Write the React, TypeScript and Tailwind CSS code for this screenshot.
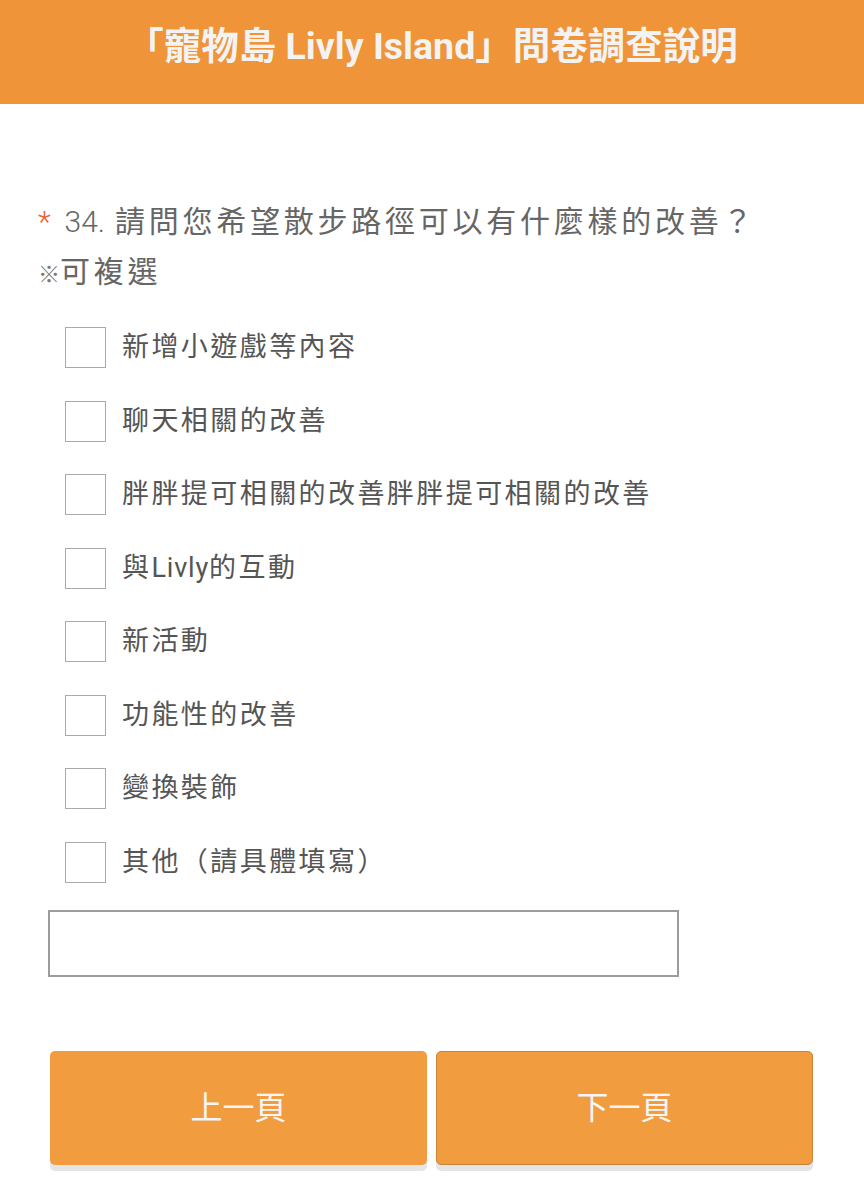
import React from 'react';

const options: React.ReactNode[] = [
  '新增小遊戲等內容',
  '聊天相關的改善',
  '胖胖提可相關的改善胖胖提可相關的改善',
  <>
    與<span className="tracking-[0.03em]">Livly</span>的互動
  </>,
  '新活動',
  '功能性的改善',
  '變換裝飾',
  '其他（請具體填寫）',
];

const App: React.FC = () => {
  return (
    <div className="w-[864px] min-h-[1198px] bg-white font-['Roboto','Noto_Sans_CJK_TC',sans-serif]">
      <header className="h-[104px] bg-[#f09439] flex items-center justify-center">
        <h1 className="text-[37.5px] font-bold text-[#f3f3f3] leading-none -mt-[10px]">
          「寵物島 Livly Island」問卷調查說明
        </h1>
      </header>

      <div className="pl-[38px] pt-[93px] text-[30px] leading-[50px] text-[#666] tracking-[0.125em]">
        <div className="flex items-baseline">
          <span className="text-[#f0602e] mr-[10px] font-light">*</span>
          <span className="font-light tracking-normal mr-[10px]">34.</span>
          <span>請問您希望散步路徑可以有什麼樣的改善？</span>
        </div>
        <div className="flex items-baseline">
          <span className="text-[22px] text-[#777] tracking-normal">※</span>
          <span>可複選</span>
        </div>
      </div>

      <ul className="mt-[27px] pl-[65px] flex flex-col gap-[32.5px]">
        {options.map((label, i) => (
          <li key={i} className="flex items-center h-[41px]">
            <span className="w-[41px] h-[41px] border border-[#aaa] bg-white shrink-0" />
            <span className="ml-[16px] text-[27px] tracking-[0.09em] text-[#555]">{label}</span>
          </li>
        ))}
      </ul>

      <div className="mt-[27px] pl-[48px]">
        <input
          type="text"
          className="w-[631px] h-[67px] border-2 border-[#9c9c9c] bg-white outline-none"
        />
      </div>

      <div className="mt-[74px] pl-[50px] flex gap-[9px]">
        <button className="w-[377px] h-[114px] rounded-[5px] bg-[#f09c3f] text-[32px] text-[#f5f5f5] shadow-[0_6px_0_#e5e5e5]">
          上一頁
        </button>
        <button className="w-[377px] h-[114px] rounded-[5px] bg-[#f09c3f] border border-[#c9843a] text-[32px] text-[#f5f5f5] shadow-[0_6px_0_#e5e5e5]">
          下一頁
        </button>
      </div>
    </div>
  );
};

export default App;
